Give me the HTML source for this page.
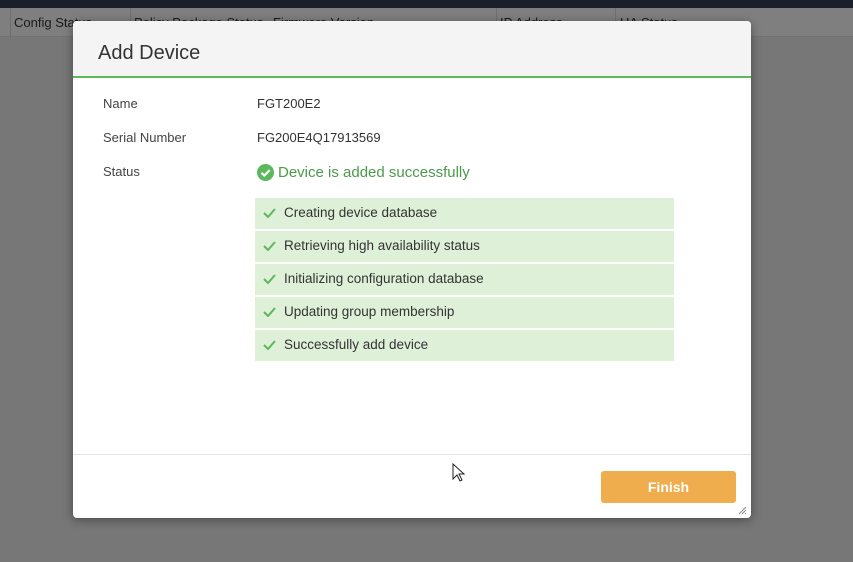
<!DOCTYPE html>
<html style="background:#777"><head><style>
*{margin:0;padding:0;box-sizing:border-box}
html,body{width:853px;height:562px}
body{background:#777;font-family:"Liberation Sans",sans-serif;position:relative;overflow:hidden}
.bg{position:absolute;left:0;top:0;width:853px;height:562px;background:#777}
.top{position:absolute;left:0;top:0;width:853px;height:8px;background:#1a1f29}
.hdr{position:absolute;left:0;top:8px;width:853px;height:29px;background:#7f7f7f;border-bottom:1px solid #727272;font-size:13px;color:#1a1a1a}
.hdr span{position:absolute;top:7px}
.hdr i{position:absolute;top:0;width:1px;height:29px;background:#6e6e6e}
.modal{position:absolute;left:73px;top:21px;width:678px;height:497px;background:#fff;border-radius:4px;box-shadow:0 2px 10px rgba(0,0,0,.4);overflow:hidden}
.mh{height:57px;background:#f4f4f4;border-bottom:2px solid #5cb85c;padding:21px 25px;font-size:20px;color:#333}
.lbl{position:absolute;left:30px;font-size:13px;color:#444}
.val{position:absolute;left:184px;font-size:13px;color:#333}
.ok{position:absolute;left:184px;top:143px;font-size:15px;color:#4a9a4a;display:flex;align-items:center;gap:4px}
.row{position:absolute;left:182px;width:419px;height:31px;background:#dff0d8;font-size:13.5px;color:#333;padding:7px 0 0 29px}
.row svg{position:absolute;left:8px;top:10px}
.foot{position:absolute;left:0;top:433px;width:678px;height:1px;background:#e5e5e5}
.btn{position:absolute;left:528px;top:450px;width:135px;height:32px;background:#f0ad4e;border-radius:3px;color:#fff;font-size:14px;font-weight:bold;text-align:center;line-height:32px}
</style></head><body>
<div class="bg"></div>
<div class="top"></div>
<div class="hdr"><i style="left:10px"></i><span style="left:14px">Config Status</span><i style="left:130px"></i><span style="left:134px">Policy Package Status</span><span style="left:273px">Firmware Version</span><i style="left:496px"></i><span style="left:500px">IP Address</span><i style="left:615px"></i><span style="left:620px">HA Status</span></div>
<div class="modal">
<div class="mh">Add Device</div>
<div class="lbl" style="top:75px">Name</div><div class="val" style="top:75px">FGT200E2</div>
<div class="lbl" style="top:109px">Serial Number</div><div class="val" style="top:109px">FG200E4Q17913569</div>
<div class="lbl" style="top:143px">Status</div>
<div class="ok"><svg width="17" height="17" viewBox="0 0 17 17"><circle cx="8.5" cy="8.5" r="8.5" fill="#5cb85c"/><path d="M4.5 8.8l2.8 2.8 5.3-5.5" stroke="#fff" stroke-width="2.2" fill="none"/></svg>Device is added successfully</div>
<div class="row" style="top:177px"><svg width="13" height="10"><path d="M1 5l4 4 7-8" stroke="#5cb85c" stroke-width="2" fill="none"/></svg>Creating device database</div>
<div class="row" style="top:210px"><svg width="13" height="10"><path d="M1 5l4 4 7-8" stroke="#5cb85c" stroke-width="2" fill="none"/></svg>Retrieving high availability status</div>
<div class="row" style="top:243px"><svg width="13" height="10"><path d="M1 5l4 4 7-8" stroke="#5cb85c" stroke-width="2" fill="none"/></svg>Initializing configuration database</div>
<div class="row" style="top:276px"><svg width="13" height="10"><path d="M1 5l4 4 7-8" stroke="#5cb85c" stroke-width="2" fill="none"/></svg>Updating group membership</div>
<div class="row" style="top:309px"><svg width="13" height="10"><path d="M1 5l4 4 7-8" stroke="#5cb85c" stroke-width="2" fill="none"/></svg>Successfully add device</div>
<div class="foot"></div>
<div class="btn">Finish</div>
<svg style="position:absolute;left:664px;top:484px" width="10" height="10"><path d="M2 9L9 2M5 9L9 5M8 9L9 8" stroke="#888" stroke-width="1"/></svg>
</div>
<svg style="position:absolute;left:452px;top:463px" width="14" height="20"><path d="M1 1v15l4-4 3 6 2-1-3-6h5z" fill="#fff" stroke="#222" stroke-width="1"/></svg>
</body></html>
